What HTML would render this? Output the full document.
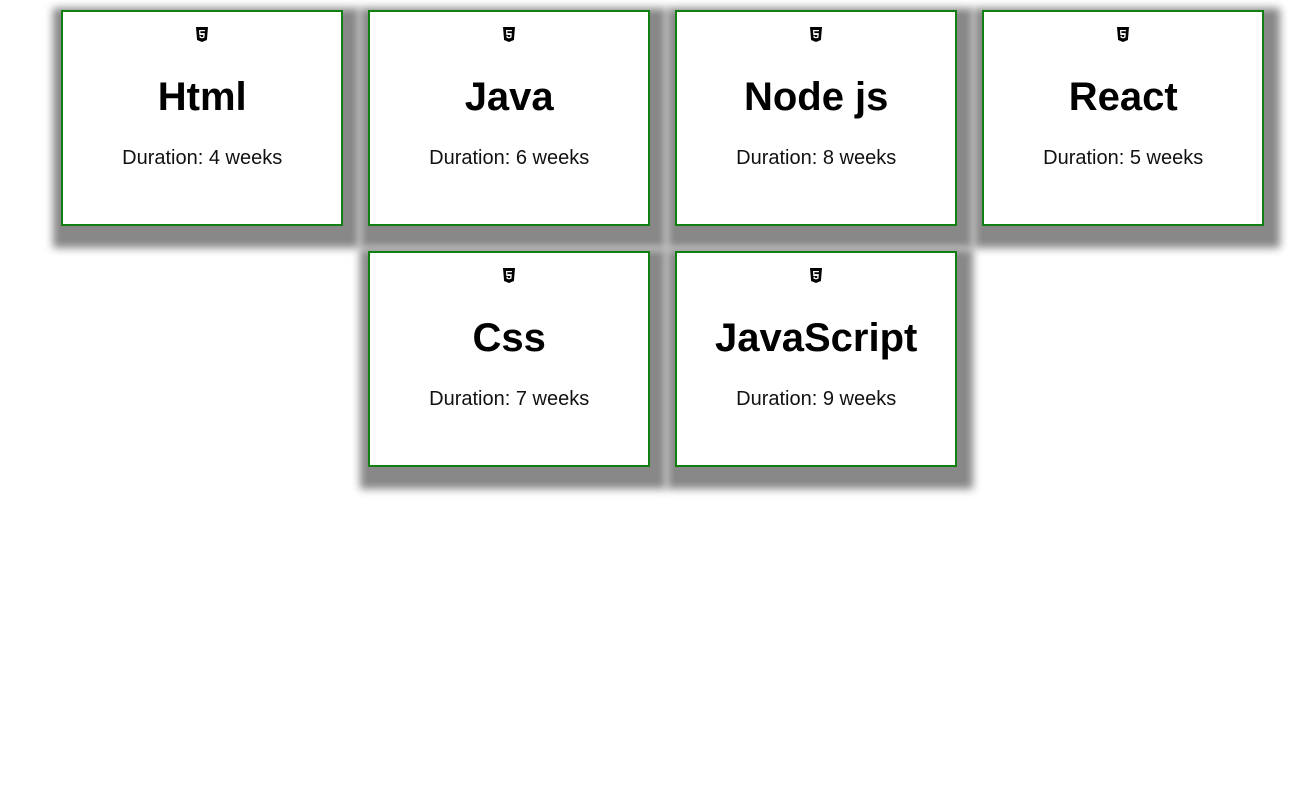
<!DOCTYPE html>
<html><head><style>
body{margin:0;background:#fff;font-family:"Liberation Sans",Arial,sans-serif;}
.wrap{position:absolute;left:48.7px;top:-2.5px;width:1228px;display:flex;flex-wrap:wrap;justify-content:center;}
.card{box-sizing:border-box;width:282px;height:216px;margin:12.5px;border:2px solid #118011;background:#fff;text-align:center;box-shadow:4px 10px 8px 12px #888;}
.ic{display:block;margin:15px auto 0;width:14px;height:17px}
h2{margin:0;font-size:40px;font-weight:bold;line-height:46px;margin-top:30px;color:#000}
p{margin:27px 0 0;font-size:20px;color:#111}
</style></head><body>
<div class="wrap">
<div class="card"><svg class="ic" viewBox="0 0 14 17"><path d="M1 0h12l-1.1 13L7 15 2.1 13z" fill="#000"/><path d="M4 3h6l-.1 1.3H5.3l.15 1.8H9.8l-.35 4.5L7 11.4l-2.4-.8-.15-1.8h1.3l.08.9 1.17.4 1.2-.4.13-1.7H4.3z" fill="#fff"/></svg><h2>Html</h2><p>Duration: 4 weeks</p></div>
<div class="card"><svg class="ic" viewBox="0 0 14 17"><path d="M1 0h12l-1.1 13L7 15 2.1 13z" fill="#000"/><path d="M4 3h6l-.1 1.3H5.3l.15 1.8H9.8l-.35 4.5L7 11.4l-2.4-.8-.15-1.8h1.3l.08.9 1.17.4 1.2-.4.13-1.7H4.3z" fill="#fff"/></svg><h2>Java</h2><p>Duration: 6 weeks</p></div>
<div class="card"><svg class="ic" viewBox="0 0 14 17"><path d="M1 0h12l-1.1 13L7 15 2.1 13z" fill="#000"/><path d="M4 3h6l-.1 1.3H5.3l.15 1.8H9.8l-.35 4.5L7 11.4l-2.4-.8-.15-1.8h1.3l.08.9 1.17.4 1.2-.4.13-1.7H4.3z" fill="#fff"/></svg><h2>Node js</h2><p>Duration: 8 weeks</p></div>
<div class="card"><svg class="ic" viewBox="0 0 14 17"><path d="M1 0h12l-1.1 13L7 15 2.1 13z" fill="#000"/><path d="M4 3h6l-.1 1.3H5.3l.15 1.8H9.8l-.35 4.5L7 11.4l-2.4-.8-.15-1.8h1.3l.08.9 1.17.4 1.2-.4.13-1.7H4.3z" fill="#fff"/></svg><h2>React</h2><p>Duration: 5 weeks</p></div>
<div class="card"><svg class="ic" viewBox="0 0 14 17"><path d="M1 0h12l-1.1 13L7 15 2.1 13z" fill="#000"/><path d="M4 3h6l-.1 1.3H5.3l.15 1.8H9.8l-.35 4.5L7 11.4l-2.4-.8-.15-1.8h1.3l.08.9 1.17.4 1.2-.4.13-1.7H4.3z" fill="#fff"/></svg><h2>Css</h2><p>Duration: 7 weeks</p></div>
<div class="card"><svg class="ic" viewBox="0 0 14 17"><path d="M1 0h12l-1.1 13L7 15 2.1 13z" fill="#000"/><path d="M4 3h6l-.1 1.3H5.3l.15 1.8H9.8l-.35 4.5L7 11.4l-2.4-.8-.15-1.8h1.3l.08.9 1.17.4 1.2-.4.13-1.7H4.3z" fill="#fff"/></svg><h2>JavaScript</h2><p>Duration: 9 weeks</p></div>
</div>
</body></html>
